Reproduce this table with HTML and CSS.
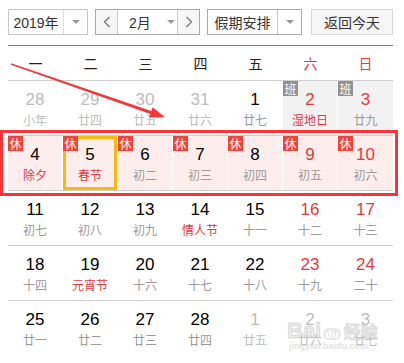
FILE: index.html
```html
<!DOCTYPE html>
<html lang="zh">
<head>
<meta charset="utf-8">
<link rel="stylesheet" href="styles.css">
</head>
<body>
<div class="page">
  <div class="toolbar">
    <div class="ctl year">
      <span class="ctl-text">2019年</span>
      <span class="drop"><i class="tri"></i></span>
    </div>
    <div class="ctl month">
      <span class="nav"><svg width="8" height="12" viewBox="0 0 8 12"><polyline points="6.5,1 1.5,6 6.5,11" fill="none" stroke="#777" stroke-width="1.2"/></svg></span>
      <span class="mtext"><span class="mlabel">2月</span><i class="tri"></i></span>
      <span class="nav"><svg width="8" height="12" viewBox="0 0 8 12"><polyline points="1.5,1 6.5,6 1.5,11" fill="none" stroke="#777" stroke-width="1.2"/></svg></span>
    </div>
    <div class="ctl holiday">
      <span class="ctl-text">假期安排</span>
      <span class="drop"><i class="tri"></i></span>
    </div>
    <div class="ctl today">返回今天</div>
  </div>

  <div class="cal">
    <div class="week">
      <span>一</span><span>二</span><span>三</span><span>四</span><span>五</span><span class="red">六</span><span class="red">日</span>
    </div>

    <div class="row">
      <div class="cell other"><b>28</b><em>小年</em></div>
      <div class="cell other"><b>29</b><em>廿四</em></div>
      <div class="cell other"><b>30</b><em>廿五</em></div>
      <div class="cell other"><b>31</b><em>廿六</em></div>
      <div class="cell"><b>1</b><em>廿七</em></div>
      <div class="cell work"><i class="badge ban">班</i><b class="rn">2</b><em class="rl">湿地日</em></div>
      <div class="cell work"><i class="badge ban">班</i><b class="rn">3</b><em>廿九</em></div>
    </div>

    <div class="row">
      <div class="cell rest"><i class="badge xiu">休</i><b>4</b><em class="rl">除夕</em></div>
      <div class="cell rest sel"><i class="badge xiu">休</i><b>5</b><em class="rl">春节</em></div>
      <div class="cell rest"><i class="badge xiu">休</i><b>6</b><em>初二</em></div>
      <div class="cell rest"><i class="badge xiu">休</i><b>7</b><em>初三</em></div>
      <div class="cell rest"><i class="badge xiu">休</i><b>8</b><em>初四</em></div>
      <div class="cell rest"><i class="badge xiu">休</i><b class="rn">9</b><em>初五</em></div>
      <div class="cell rest"><i class="badge xiu">休</i><b class="rn">10</b><em>初六</em></div>
    </div>

    <div class="row">
      <div class="cell"><b>11</b><em>初七</em></div>
      <div class="cell"><b>12</b><em>初八</em></div>
      <div class="cell"><b>13</b><em>初九</em></div>
      <div class="cell"><b>14</b><em class="rl">情人节</em></div>
      <div class="cell"><b>15</b><em>十一</em></div>
      <div class="cell"><b class="rn">16</b><em>十二</em></div>
      <div class="cell"><b class="rn">17</b><em>十三</em></div>
    </div>

    <div class="row">
      <div class="cell"><b>18</b><em>十四</em></div>
      <div class="cell"><b>19</b><em class="rl">元宵节</em></div>
      <div class="cell"><b>20</b><em>十六</em></div>
      <div class="cell"><b>21</b><em>十七</em></div>
      <div class="cell"><b>22</b><em>十八</em></div>
      <div class="cell"><b class="rn">23</b><em>十九</em></div>
      <div class="cell"><b class="rn">24</b><em>二十</em></div>
    </div>

    <div class="row last">
      <div class="cell"><b>25</b><em>廿一</em></div>
      <div class="cell"><b>26</b><em>廿二</em></div>
      <div class="cell"><b>27</b><em>廿三</em></div>
      <div class="cell"><b>28</b><em>廿四</em></div>
      <div class="cell other"><b>1</b><em>廿五</em></div>
      <div class="cell other"><b>2</b><em>廿六</em></div>
      <div class="cell other"><b>3</b><em>廿七</em></div>
    </div>
  </div>

  <div class="redbox"></div>
  <svg class="arrow" width="404" height="363" viewBox="0 0 404 363">
    <polygon points="11.2,63.3 151.3,110.9 152.6,107.2 165,117.3 148.8,117.6 150.3,113.9 10.8,64.7" fill="#f03a3a"/>
  </svg>
  <div class="watermark">
    <div class="wm-top"><span class="wm-bai">Bai</span><span class="wm-du">du</span><span class="wm-jy">经验</span></div>
    <div class="wm-url">jingyan.baidu.com</div>
  </div>
</div>
</body>
</html>
```

FILE: styles.css
```css
html, body {
  margin: 0;
  padding: 0;
  background: #fff;
}
body {
  font-family: "Liberation Sans", Arial, "Noto Sans CJK SC", sans-serif;
  color: #000;
}
.page {
  position: relative;
  width: 404px;
  height: 363px;
  overflow: hidden;
}
.toolbar {
  display: flex;
  margin: 9px 0 0 8px;
  height: 26px;
}
.ctl {
  box-sizing: border-box;
  height: 26px;
  display: flex;
  align-items: stretch;
  border: 1px solid #c8c8c8;
  font-family: "Noto Sans CJK SC", sans-serif;
  font-size: 14px;
  color: #333;
  background: #fff;
  white-space: nowrap;
}
.ctl-text {
  display: flex;
  align-items: center;
  justify-content: center;
}
.year { width: 80px; margin-right: 7px; }
.year .ctl-text { width: 54px; border-right: 1px solid #ddd; font-family: "Liberation Sans", "Noto Sans CJK SC", sans-serif; }
.drop {
  flex: 1;
  display: flex;
  align-items: center;
  justify-content: center;
}
.tri {
  display: inline-block;
  width: 0;
  height: 0;
  border-left: 4px solid transparent;
  border-right: 4px solid transparent;
  border-top: 4px solid #999;
}
.month { width: 105px; margin-right: 7px; border-color: #aaa; }
.nav {
  width: 21px;
  flex: none;
  background: #f6f6f6;
  display: flex;
  align-items: center;
  justify-content: center;
}
.nav:first-child { border-right: 1px solid #ccc; }
.nav:last-child { border-left: 1px solid #ccc; }
.mtext {
  flex: 1;
  display: flex;
  align-items: center;
  padding-left: 11px;
  font-family: "Liberation Sans", "Noto Sans CJK SC", sans-serif;
}
.mlabel { white-space: nowrap; }
.mtext .tri { margin-left: 16px; }
.holiday { width: 95px; margin-right: 9px; border-color: #aaa; }
.holiday .ctl-text { width: 69px; border-right: 1px solid #ccc; }
.today {
  width: 82px;
  justify-content: center;
  align-items: center;
  background: #f6f6f6;
  border-color: #d8d8d8;
}

.cal {
  margin: 10px 0 0 8px;
  width: 385px;
  border-top: 1px solid #e3574a;
}
.week {
  display: grid;
  grid-template-columns: repeat(7, 55px);
  height: 34px;
  align-items: center;
  border-bottom: 1px solid #cfcfcf;
  font-family: "Noto Sans CJK SC", sans-serif;
  font-size: 14px;
  color: #222;
}
.week span { text-align: center; }
.week .red { color: #e4393c; }
.row {
  display: grid;
  grid-template-columns: repeat(7, 55px);
  height: 54px;
  border-bottom: 1px solid #cfcfcf;
}
.row.last { border-bottom: none; }
.cell {
  position: relative;
  box-sizing: border-box;
  border-right: 1px solid #fff;
  display: flex;
  flex-direction: column;
  align-items: center;
  padding-top: 9px;
}
.cell:last-child { border-right: none; }
.cell b {
  font-weight: normal;
  font-size: 17px;
  line-height: 20px;
  color: #000;
}
.cell em {
  font-style: normal;
  font-family: "Noto Sans CJK SC", sans-serif;
  font-size: 12px;
  line-height: 18px;
  margin-top: 1px;
  color: #9a9a9a;
}
.cell.other b { color: #bdbdbd; }
.cell.other em { color: #bdbdbd; }
.cell .rn { color: #e4393c; }
.cell .rl { color: #e4393c; }
.work { background: #f2f2f2; }
.rest { background: #fdeeed; }
.sel { box-shadow: inset 0 0 0 3px #fbb80f; }
.badge {
  position: absolute;
  left: 0;
  top: 0;
  width: 15px;
  height: 15px;
  font-style: normal;
  font-family: "Noto Sans CJK SC", sans-serif;
  font-size: 12px;
  line-height: 15px;
  text-align: center;
  color: #fff;
}
.xiu { background: #f2433b; }
.ban { background: #929292; }

.redbox {
  position: absolute;
  left: 0;
  top: 130px;
  width: 398px;
  height: 66px;
  box-sizing: border-box;
  border: 3px solid #f53537;
  pointer-events: none;
}
.arrow {
  position: absolute;
  left: 0;
  top: 0;
  pointer-events: none;
}
.watermark {
  position: absolute;
  left: 287px;
  top: 318px;
  width: 100px;
  color: rgba(200, 200, 200, 0.55);
  pointer-events: none;
}
.wm-top {
  display: flex;
  align-items: baseline;
  font-family: "Liberation Sans", sans-serif;
}
.wm-bai { font-size: 22px; font-weight: bold; color: rgba(225,225,225,0.6); -webkit-text-stroke: 1px rgba(190,190,190,0.5); }
.wm-du { font-size: 11px; font-weight: bold; margin: 0 3px 0 2px; padding: 0 2px; border-radius: 6px; background: rgba(210,210,210,0.5); color: #fff; }
.wm-jy { font-family: "Noto Sans CJK SC", sans-serif; font-size: 17px; font-weight: bold; color: rgba(225,225,225,0.6); -webkit-text-stroke: 1px rgba(190,190,190,0.45); }
.wm-url { font-size: 9px; font-weight: bold; margin-top: -3px; padding-left: 2px; color: rgba(205,205,205,0.6); }
```
